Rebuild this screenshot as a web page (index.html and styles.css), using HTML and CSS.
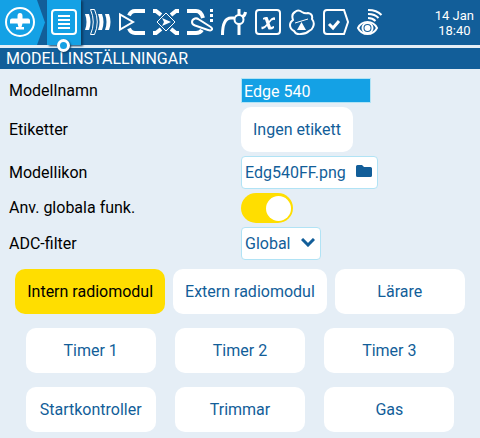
FILE: index.html
```html
<!DOCTYPE html>
<html lang="sv">
<head>
<meta charset="utf-8">
<meta name="viewport" content="width=device-width, initial-scale=1">
<title>Modellinställningar</title>
<link rel="stylesheet" href="styles.css">
</head>
<body>
<header class="topbar">
  <button class="home" type="button" aria-label="Modell">
    <svg class="home-icon" viewBox="0 0 46 45" aria-hidden="true">
      <path class="home-shape" d="M0 0H37L45 22.500L37 45H0Z"/>
      <circle class="line" cx="20" cy="22" r="14"/>
      <path class="solid" d="M20 13Q22.500 13 22.500 16V18.500H28Q30 18.500 30 20.500V23.500H22.500L21.500 27H24V29.500H16V27H18.500L17.500 23.500H10V20.500Q10 18.500 12 18.500H17.500V16Q17.500 13 20 13Z"/>
    </svg>
  </button>
  <nav class="tabs" aria-label="Modellmeny">
    <button class="tab tab-active" type="button" aria-label="Modellinställningar">
      <svg class="icon" viewBox="0 0 26 26" aria-hidden="true">
        <rect class="line" x="1" y="1" width="24" height="24" rx="3"/>
        <path class="line" d="M7 7H19M7 11H19M7 15H19M7 19H19"/>
      </svg>
    </button>
    <button class="tab" type="button" aria-label="Flyglägen">
      <svg class="icon" viewBox="0 0 26 26" aria-hidden="true">
        <path class="solid" d="M0 5H4Q7 13 4 21H0Q3 13 0 5ZM13 5H17Q20 13 17 21H13Q16 13 13 5ZM20 5H24Q27 13 24 21H20Q23 13 20 5Z"/>
        <path class="thin" d="M5.500 .5H9.500Q15 13 9.500 25.500H5.500Q11 13 5.500 .5Z"/>
      </svg>
    </button>
    <button class="tab" type="button" aria-label="Ingångar">
      <svg class="icon" viewBox="0 0 26 26" aria-hidden="true">
        <path class="line" d="M1 5.500V20.500L14 13Z"/>
        <path class="heavy" d="M26 2H16Q12 2 10 6.500M26 24H16Q12 24 10 19.500"/>
      </svg>
    </button>
    <button class="tab" type="button" aria-label="Mixar">
      <svg class="icon" viewBox="0 0 26 26" aria-hidden="true">
        <path class="heavy" d="M0 2H3L8 6M26 2H23L18 6M0 24H3L8 20M26 24H23L18 20"/>
        <path class="thin" d="M13 4L22 13L13 22L4 13Z"/>
        <path class="solid" d="M9 9L18 13L9 17L11 13Z"/>
      </svg>
    </button>
    <button class="tab" type="button" aria-label="Utgångar">
      <svg class="icon" viewBox="0 0 26 26" aria-hidden="true">
        <path class="heavy" d="M0 2H9Q14 2 16 9M0 24H9Q13 24 15 21"/>
        <path class="line" d="M8 9.500Q5 10.500 5 13Q5 15.500 8 16.500L21 21Q24 22 25 20.500Q25.500 19 23 17.500L12 10.500Q10 9 8 9.500Z"/>
        <path class="solid" d="M23 0H26V3H23ZM23 5H26V8H23ZM23 10H26V13H23Z"/>
      </svg>
    </button>
    <button class="tab" type="button" aria-label="Kurvor">
      <svg class="icon" viewBox="0 0 26 26" aria-hidden="true">
        <path class="thick" d="M1.500 26Q1.500 9 10 9H13M18 0V6M18 15V26M21 8Q24 7 24.500 3"/>
        <circle class="line" cx="18" cy="10.500" r="4.500"/>
      </svg>
    </button>
    <button class="tab" type="button" aria-label="Globala variabler">
      <svg class="icon" viewBox="0 0 26 26" aria-hidden="true">
        <rect class="line" x="1" y="1" width="24" height="24" rx="3"/>
        <path class="solid" d="M8 9Q10 7.500 12.500 8L14 12Q17 7.500 20 8.500V11Q17 10 14.500 14L16 18L19 17V19Q17 21 13.500 20.500L12 17Q9 21 6.500 20V17.500Q9 18.500 11.500 15L10 10.500L8 10.500Z"/>
      </svg>
    </button>
    <button class="tab" type="button" aria-label="Logiska brytare">
      <svg class="icon" viewBox="0 0 26 26" aria-hidden="true">
        <path class="line" d="M4 11Q2 5 6 3Q9 0 13 3Q16 5 19 4Q24 5 23 10Q26 14 24 18Q23 21 20 22Q17 25 12 25Q7 26 5 22Q1 20 1 16Q1 13 4 11Z"/>
        <path class="solid" d="M12.500 13L17 21H8Z"/>
        <path class="thin" d="M6 14L19 10"/>
      </svg>
    </button>
    <button class="tab" type="button" aria-label="Specialfunktioner">
      <svg class="icon" viewBox="0 0 26 26" aria-hidden="true">
        <path class="line" d="M4 1H21L25 13L21 25H4Q1 25 1 22V4Q1 1 4 1Z"/>
        <path class="thick" d="M6 15L10 19L16 12"/>
      </svg>
    </button>
    <button class="tab" type="button" aria-label="Telemetri">
      <svg class="icon" viewBox="0 0 26 26" aria-hidden="true">
        <path class="line" d="M1 19Q4 13 10.500 13Q17 13 20 19Q17 25 10.500 25Q4 25 1 19Z"/>
        <circle class="line" cx="10.500" cy="19" r="5"/>
        <circle class="solid" cx="10.500" cy="19" r="3"/>
        <path class="line" d="M11 1Q20 1 24.500 6M11 5Q18 5 21.500 9M11 9Q15.500 9 18.500 12"/>
      </svg>
    </button>
  </nav>
  <div class="clock"><span>14 Jan</span><time>18:40</time></div>
</header>

<h1 class="title">MODELLINSTÄLLNINGAR</h1>

<main>
  <form class="settings">
    <label for="name">Modellnamn</label>
    <input class="field" id="name" type="text" value="Edge 540">
    <label for="tags">Etiketter</label>
    <button class="button" id="tags" type="button">Ingen etikett</button>
    <label for="picture">Modellikon</label>
    <button class="picker" id="picture" type="button">Edg540FF.png
      <svg class="folder" viewBox="0 0 16 12" aria-hidden="true"><path d="M1.500 0H6L8 2H14.500Q16 2 16 3.500V10.500Q16 12 14.500 12H1.500Q0 12 0 10.500V1.500Q0 0 1.500 0Z"/></svg>
    </button>
    <label for="global">Anv. globala funk.</label>
    <input class="switch" id="global" type="checkbox" checked>
    <label for="adc">ADC-filter</label>
    <span class="choice">
      <select id="adc"><option>Global</option><option>På</option><option>Av</option></select>
      <svg class="chevron" viewBox="0 0 14 9" aria-hidden="true"><path d="M1 1L7 7L13 1"/></svg>
    </span>
  </form>

  <div class="modules">
    <button class="button button-on" type="button">Intern radiomodul</button>
    <button class="button" type="button">Extern radiomodul</button>
    <button class="button" type="button">Lärare</button>
  </div>
  <div class="pages">
    <button class="button" type="button">Timer 1</button>
    <button class="button" type="button">Timer 2</button>
    <button class="button" type="button">Timer 3</button>
    <button class="button" type="button">Startkontroller</button>
    <button class="button" type="button">Trimmar</button>
    <button class="button" type="button">Gas</button>
  </div>
</main>
</body>
</html>
```
FILE: styles.css
```css
:root {
  --blue: #125e99;
  --bright: #14a1e5;
  --pale: #e5eef6;
  --edge: #b1e3f5;
  --yellow: #ffde00;
}

*, *::before, *::after { box-sizing: border-box; }

body {
  margin: 0;
  background: var(--pale);
  color: #000;
  font: 16px/20px Roboto, sans-serif;
}

button, input, select {
  margin: 0;
  border: 0;
  font: inherit;
}

.topbar {
  display: flex;
  height: 45px;
  background: var(--blue);
  color: #fff;
}

.home, .tab {
  padding: 0;
  background: none;
  color: #fff;
}

.home { width: 47px; }

.home-icon {
  display: block;
  width: 46px;
  height: 45px;
}

.home-shape { fill: var(--bright); }

.tabs { display: flex; }

.tab {
  position: relative;
  display: grid;
  place-items: center;
  width: 34px;
  padding-bottom: 1px;
}

.tab-active {
  background: var(--bright);
  box-shadow: 2px 1px 2px #0b3c63;
}

.tab-active::after {
  content: "";
  position: absolute;
  bottom: -7px;
  left: 10px;
  width: 13px;
  height: 13px;
  border: 3px solid #fff;
  border-radius: 50%;
  background: var(--bright);
  box-shadow: 1px 1px 2px #0b3c63;
}

.icon {
  width: 26px;
  height: 26px;
}

.line, .thin, .thick, .heavy {
  fill: none;
  stroke: currentColor;
  stroke-width: 2;
}

.thin { stroke-width: 1; }
.thick { stroke-width: 3; }
.heavy { stroke-width: 4; }
.solid { fill: currentColor; }

.clock {
  display: flex;
  flex-direction: column;
  justify-content: center;
  margin-left: auto;
  padding-right: 6px;
  font-size: 13px;
  line-height: 15px;
  text-align: center;
}

.title {
  margin: 3px 0 0;
  padding: 0 6px;
  background: var(--blue);
  color: #fff;
  font-size: 16px;
  font-weight: 400;
  line-height: 21px;
}

.settings {
  display: grid;
  grid-template-columns: 230px 1fr;
  gap: 4px 2px;
  align-items: center;
  justify-items: start;
  padding: 9px 0 9px 9px;
}

.field {
  width: 130px;
  height: 25px;
  padding: 1px 2px 0;
  border: 1px solid var(--edge);
  background: var(--bright);
  color: #fff;
}

.button {
  min-width: 130px;
  height: 45px;
  padding: 0 12px;
  border-radius: 10px;
  background: #fff;
  color: var(--blue);
  white-space: nowrap;
}

.settings .button { min-width: 0; }

.button-on {
  background: var(--yellow);
  color: #000;
}

.picker, .choice {
  display: flex;
  align-items: center;
  height: 33px;
  padding: 1px 5px 0 3px;
  border: 1px solid var(--edge);
  border-radius: 4px;
  background: #fff;
  color: var(--blue);
}

.picker { gap: 10px; }

.folder {
  width: 16px;
  height: 12px;
  margin-bottom: 5px;
  fill: currentColor;
}

.choice { position: relative; }

.choice select {
  width: 70px;
  height: 30px;
  padding: 0;
  appearance: none;
  background: none;
  color: inherit;
}

.chevron {
  position: absolute;
  right: 5px;
  width: 14px;
  height: 9px;
  margin-bottom: 4px;
  fill: none;
  stroke: currentColor;
  stroke-width: 3;
  pointer-events: none;
}

.switch {
  display: flex;
  align-items: center;
  width: 52px;
  height: 30px;
  padding: 0 2px;
  appearance: none;
  border-radius: 15px;
  background: #b8c8d4;
}

.switch::before {
  content: "";
  width: 25px;
  height: 25px;
  border-radius: 50%;
  background: #fff;
}

.switch:checked {
  justify-content: flex-end;
  background: var(--yellow);
}

.modules {
  display: flex;
  justify-content: center;
  gap: 8px;
}

.pages {
  display: grid;
  grid-template-columns: repeat(3, 1fr);
  gap: 14px 0;
  justify-items: center;
  padding: 14px 16px 6px;
}
```
